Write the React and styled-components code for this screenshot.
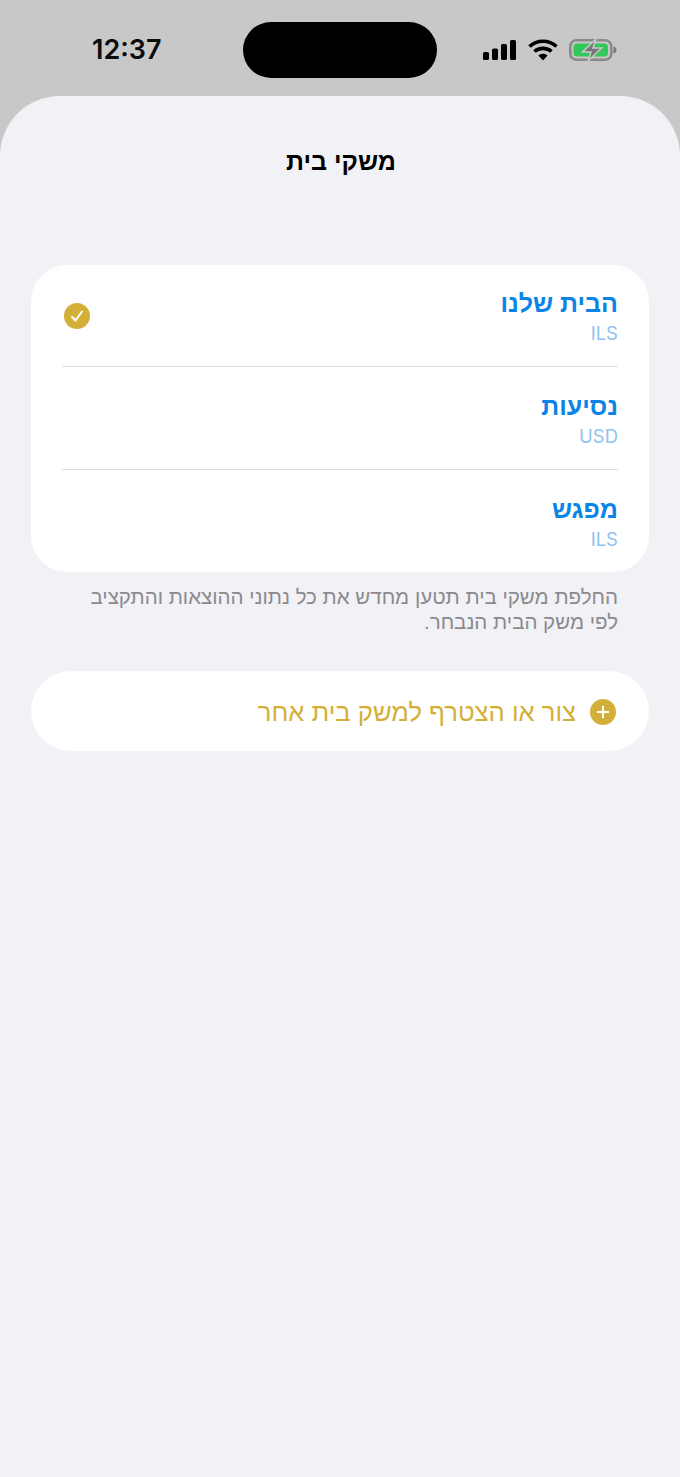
import React from "react";
import styled, { createGlobalStyle } from "styled-components";

const Global = createGlobalStyle`
  html, body {
    margin: 0;
    padding: 0;
    background: #c8c8c9;
  }
  * {
    box-sizing: border-box;
  }
`;

const Page = styled.div`
  width: 680px;
  height: 1477px;
  display: flex;
  flex-direction: column;
  overflow: hidden;
  background: #c8c8c9;
  font-family: "Liberation Sans", Arial, sans-serif;
`;

const StatusBar = styled.div`
  height: 96px;
  flex: none;
  display: flex;
  align-items: flex-start;
  padding: 22px 0 0 92px;
`;

const Time = styled.div`
  width: 151px;
  margin-top: 12px;
  font-family: Inter, sans-serif;
  font-size: 27px;
  line-height: 32px;
  font-weight: 600;
  color: #0b0b0c;
`;

const Island = styled.div`
  width: 194px;
  height: 56px;
  border-radius: 28px;
  background: #000;
`;

const StatusIcons = styled.div`
  height: 56px;
  margin-left: 45px;
  display: flex;
  align-items: center;
  gap: 10px;
`;

const Sheet = styled.div`
  flex: 1;
  display: flex;
  flex-direction: column;
  padding: 0 31px;
  background: #f1f1f6;
  border-radius: 60px 60px 0 0;
`;

const Title = styled.h1`
  margin: 0;
  padding: 50px 0 0 2px;
  height: 169px;
  text-align: center;
  font-size: 25px;
  line-height: 30px;
  font-weight: 700;
  color: #000;
`;

const Card = styled.div`
  direction: rtl;
  background: #fff;
  border-radius: 36px;
  overflow: hidden;
`;

const Row = styled.div`
  height: ${(p) => (p.$middle ? "103px" : "102px")};
  margin: 0 31px;
  display: flex;
  align-items: center;
  justify-content: space-between;
  border-bottom: ${(p) => (p.$last ? "none" : "1px solid #dcdcdf")};
`;

const Household = styled.div`
  display: flex;
  flex-direction: column;
  gap: 4px;
  padding-top: 1px;
`;

const Name = styled.div`
  font-size: 25px;
  line-height: 30px;
  font-weight: 700;
  color: #0a84e8;
`;

const Currency = styled.div`
  font-family: Inter, sans-serif;
  font-size: 18.5px;
  line-height: 22px;
  color: #8fc2f1;
`;

const SelectedMark = styled.div`
  display: flex;
  margin-left: 2px;
`;

const Note = styled.p`
  direction: rtl;
  margin: 0;
  padding: 12px 31px 0 0;
  height: 99px;
  font-size: 20.5px;
  line-height: 25px;
  color: #8a8a8e;
`;

const ActionCard = styled.div`
  direction: rtl;
  height: 80px;
  flex: none;
  padding: 1px 33px 0;
  display: flex;
  align-items: center;
  gap: 14px;
  background: #fff;
  border-radius: 40px;
`;

const ActionLabel = styled.span`
  font-size: 25.6px;
  line-height: 30px;
  color: #d4af37;
`;

const CellSignal = () => (
  <svg width="36" height="22" viewBox="0 0 36 22">
    <rect x="1" y="13" width="6" height="8" rx="1.5" fill="#000" />
    <rect x="10" y="9.500" width="6" height="11.500" rx="1.5" fill="#000" />
    <rect x="19" y="5" width="6" height="16" rx="1.5" fill="#000" />
    <rect x="28" y="1" width="6" height="20" rx="1.5" fill="#000" />
  </svg>
);

const Wifi = () => (
  <svg width="30" height="24" viewBox="0 0 30 24">
    <path d="M1.500 8.500C9 1.500 21 1.500 28.500 8.500" fill="none" stroke="#000" strokeWidth="3.600" />
    <path d="M6.500 13.500C11 9.300 19 9.300 23.500 13.500" fill="none" stroke="#000" strokeWidth="3.600" />
    <path d="M10.400 17.400C13 15.200 17 15.200 19.600 17.400L15 22.500Z" fill="#000" />
  </svg>
);

const Battery = () => (
  <svg width="48" height="24" viewBox="0 0 48 24" style={{ marginLeft: 1 }}>
    <rect x="1.300" y="2.300" width="41" height="19.400" rx="6" fill="none" stroke="#8a8a8a" strokeWidth="2.600" />
    <rect x="4.500" y="5.500" width="34.500" height="13" rx="3.500" fill="#34c759" />
    <path d="M44.500 8.500c2 .4 3 1.700 3 3.500s-1 3.100-3 3.500Z" fill="#77777a" />
    <path d="M27 1 13.500 14H22L19 23 32.500 10H24Z" fill="#77777a" stroke="#c8c8c9" strokeWidth="1.500" />
  </svg>
);

const CheckBadge = () => (
  <svg width="26" height="26" viewBox="0 0 26 26">
    <circle cx="13" cy="13" r="13" fill="#d4af37" />
    <path d="M8 13.800 11.500 17.500 18 8.500" fill="none" stroke="#fff" strokeWidth="2" strokeLinecap="round" strokeLinejoin="round" />
  </svg>
);

const PlusBadge = () => (
  <svg width="26" height="26" viewBox="0 0 26 26">
    <circle cx="13" cy="13" r="13" fill="#d4af37" />
    <path d="M13 7.800V18.200M7.800 13H18.200" stroke="#fff" strokeWidth="2.200" strokeLinecap="round" />
  </svg>
);

const households = [
  { name: "הבית שלנו", currency: "ILS", selected: true },
  { name: "נסיעות", currency: "USD" },
  { name: "מפגש", currency: "ILS" },
];

export default function App() {
  return (
    <Page>
      <Global />
      <StatusBar>
        <Time>12:37</Time>
        <Island />
        <StatusIcons>
          <CellSignal />
          <Wifi />
          <Battery />
        </StatusIcons>
      </StatusBar>
      <Sheet>
        <Title dir="rtl">משקי בית</Title>
        <Card>
          {households.map((h, i) => (
            <Row key={h.name} $middle={i === 1} $last={i === households.length - 1}>
              <Household>
                <Name>{h.name}</Name>
                <Currency>{h.currency}</Currency>
              </Household>
              {h.selected && (
                <SelectedMark>
                  <CheckBadge />
                </SelectedMark>
              )}
            </Row>
          ))}
        </Card>
        <Note>
          החלפת משקי בית תטען מחדש את כל נתוני ההוצאות והתקציב
          <br />
          לפי משק הבית הנבחר.
        </Note>
        <ActionCard>
          <PlusBadge />
          <ActionLabel>צור או הצטרף למשק בית אחר</ActionLabel>
        </ActionCard>
      </Sheet>
    </Page>
  );
}
